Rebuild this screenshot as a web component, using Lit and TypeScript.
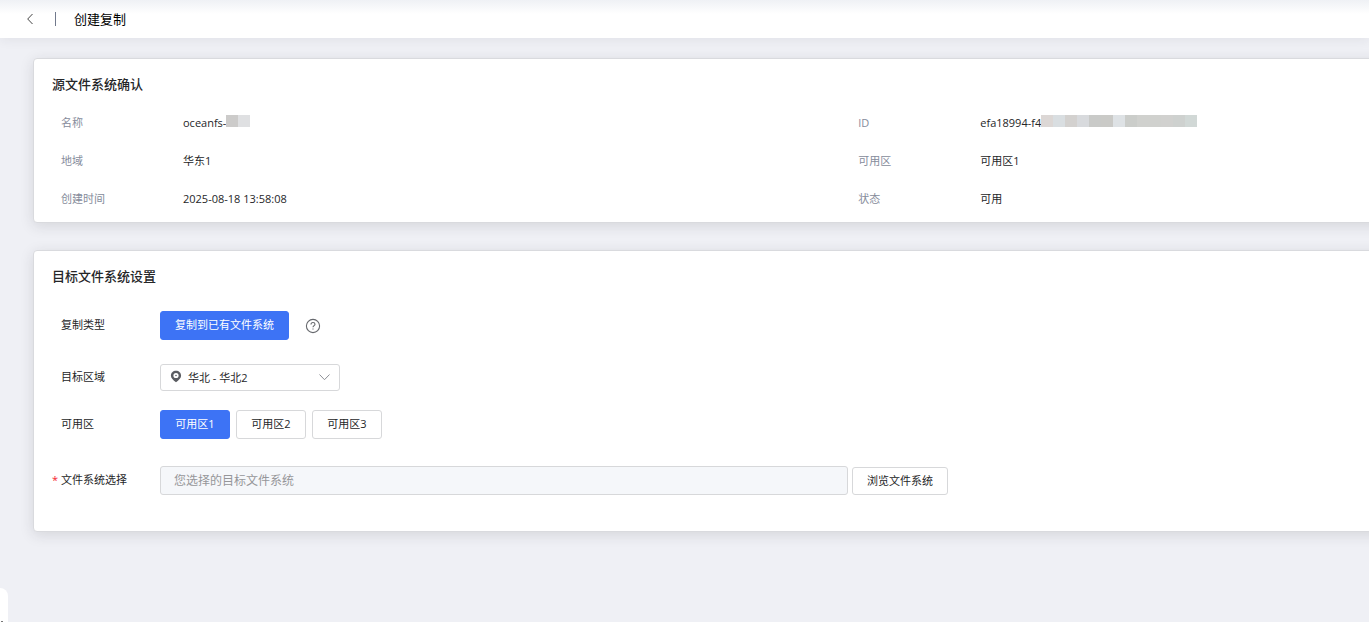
import { LitElement, html, css } from "lit";
import { customElement, state } from "lit/decorators.js";
import { styleMap } from "lit/directives/style-map.js";

interface Field {
  label: string;
  value: string;
  mask?: string[];
}

const FIELDS: Field[] = [
  { label: "名称", value: "oceanfs-", mask: ["#cccbca", "#dfe0e2"] },
  {
    label: "ID",
    value: "efa18994-f4",
    mask: [
      "#dcd7d5", "#d9dee1", "#d3d1cf", "#d8dadd", "#c9cac8", "#cacac7", "#dee2e5",
      "#cbcdca", "#d0d1ce", "#d0d1ce", "#d1d1cf", "#ced1cf", "#d1d8d6",
    ],
  },
  { label: "地域", value: "华东1" },
  { label: "可用区", value: "可用区1" },
  { label: "创建时间", value: "2025-08-18 13:58:08" },
  { label: "状态", value: "可用" },
];

const ZONES = ["可用区1", "可用区2", "可用区3"];

@customElement("app-root")
export class AppRoot extends LitElement {
  @state() private zone = ZONES[0];

  static styles = css`
    :host {
      display: block;
      min-height: 100vh;
      overflow: hidden;
      background: #eff0f5;
      color: #252628;
      font: 11px/20px "Open Sans", "Noto Sans CJK SC", sans-serif;
    }
    * {
      box-sizing: border-box;
    }
    .header {
      display: flex;
      align-items: center;
      height: 38px;
      padding-left: 24px;
      background: linear-gradient(#eff1f5, #fff 14px);
      box-shadow: 0 2px 12px rgba(37, 43, 58, 0.07);
    }
    .back {
      display: flex;
      padding: 0;
      border: 0;
      background: none;
    }
    .divider {
      width: 1px;
      height: 14px;
      margin: 0 18px;
      background: #71798c;
    }
    .title {
      margin: 0;
      color: #000;
      font-size: 13px;
      font-weight: 400;
    }
    .main {
      display: grid;
      gap: 27px;
      margin-right: -24px;
      padding: 20px 0 20px 33px;
    }
    .card {
      padding: 15px 24px 4px 18px;
      border: 1px solid #d9dade;
      border-radius: 4px;
      background: #fff;
      box-shadow: 0 3px 14px rgba(37, 38, 43, 0.13);
    }
    .card.settings {
      padding-bottom: 36px;
    }
    .card h2 {
      margin: 0;
      font-size: 13px;
      font-weight: 500;
      line-height: 20px;
    }
    .fields {
      display: grid;
      grid-template-columns: 61fr 39fr;
      margin: 10px 0 0;
      padding-left: 9px;
    }
    .field {
      display: flex;
      align-items: center;
      height: 38px;
    }
    .field dt {
      flex: 0 0 122px;
      color: #868c9b;
    }
    .field dd {
      display: flex;
      align-items: flex-start;
      margin: 0;
    }
    .mask {
      display: flex;
      padding-top: 2px;
    }
    .mask span {
      width: 12px;
      height: 12px;
    }
    .row {
      display: flex;
      align-items: center;
      max-width: 896px;
    }
    .type {
      margin-top: 25px;
    }
    .region {
      margin-top: 24px;
    }
    .zones {
      margin-top: 19px;
    }
    .target {
      margin-top: 27px;
    }
    .label {
      display: flex;
      flex: 0 0 108px;
      padding-bottom: 2px;
    }
    .label::before {
      content: "";
      width: 9px;
    }
    .label.required::before {
      content: "*";
      color: #f5222d;
    }
    .btn {
      height: 29px;
      padding: 0 14px 2px;
      border: 1px solid #d7d8da;
      border-radius: 3px;
      background: #fff;
      color: inherit;
      font: inherit;
      line-height: 20px;
      white-space: nowrap;
    }
    .btn.active {
      border-color: #3d73f5;
      background: #3d73f5;
      color: #fff;
    }
    .btn.browse {
      align-self: flex-end;
      height: 28px;
      margin-left: 4px;
      padding: 0 14px;
    }
    .group {
      display: flex;
      gap: 6px;
    }
    .group .btn {
      min-width: 70px;
    }
    .help {
      display: flex;
      margin-left: 16px;
      padding: 0;
      border: 0;
      background: none;
    }
    .select {
      position: relative;
      width: 180px;
      height: 27px;
    }
    .select select {
      width: 100%;
      height: 100%;
      padding: 0 28px 0 27px;
      border: 1px solid #d7d8da;
      border-radius: 3px;
      background: #fff;
      color: inherit;
      font: inherit;
      appearance: none;
    }
    .pin,
    .arrow {
      position: absolute;
      pointer-events: none;
    }
    .pin {
      top: 6px;
      left: 10px;
    }
    .arrow {
      top: 9px;
      right: 9px;
    }
    .input {
      flex: 1;
      min-width: 0;
      height: 29px;
      padding: 0 13px;
      border: 1px solid #d7d8da;
      border-radius: 3px;
      background: #f5f7fa;
      font: inherit;
      font-size: 12px;
    }
    .input::placeholder {
      color: #959699;
      opacity: 1;
    }
    .drawer {
      position: fixed;
      bottom: 0;
      left: 0;
      width: 8px;
      height: 34px;
      border-radius: 0 9px 0 0;
      background: #fff;
    }
    .drawer::after {
      content: "";
      position: absolute;
      bottom: 0;
      left: 1px;
      width: 2px;
      height: 1px;
      background: #777;
    }
  `;

  private renderField(f: Field) {
    return html`<div class="field">
      <dt>${f.label}</dt>
      <dd>
        ${f.value}${f.mask
          ? html`<span class="mask" aria-hidden="true"
              >${f.mask.map((c) => html`<span style=${styleMap({ background: c })}></span>`)}</span
            >`
          : null}
      </dd>
    </div>`;
  }

  render() {
    return html`
      <header class="header">
        <button class="back" aria-label="返回">
          <svg width="13" height="12" viewBox="0 0 13 12" fill="none" stroke="#444" stroke-width="1">
            <path d="M8.500 1 3.700 6l4.800 5" />
          </svg>
        </button>
        <span class="divider"></span>
        <h1 class="title">创建复制</h1>
      </header>
      <main class="main">
        <section class="card">
          <h2>源文件系统确认</h2>
          <dl class="fields">${FIELDS.map((f) => this.renderField(f))}</dl>
        </section>
        <section class="card settings">
          <h2>目标文件系统设置</h2>
          <div class="row type">
            <span class="label">复制类型</span>
            <button class="btn active">复制到已有文件系统</button>
            <button class="help" aria-label="帮助">
              <svg width="16" height="16" viewBox="0 0 16 16" fill="none" stroke="#66686d" stroke-width="1.1">
                <circle cx="8" cy="8" r="6.600" />
                <path d="M6 6.500c0-1.300.8-2 2-2s2 .7 2 1.800c0 1.300-2 1.500-2 3" />
                <path d="M8 10.400v1.200" />
              </svg>
            </button>
          </div>
          <div class="row region">
            <label class="label" for="region">目标区域</label>
            <div class="select">
              <select id="region">
                <option>华北 - 华北2</option>
              </select>
              <svg class="pin" width="12" height="13" viewBox="0 0 12 13">
                <path
                  fill="#5a5c61"
                  fill-rule="evenodd"
                  d="M6 .8C3.100.8.900 2.900.900 5.700.900 8.300 3.200 9.800 6 12.300 8.800 9.800 11.100 8.300 11.100 5.700 11.100 2.900 8.900.8 6 .8Zm0 2.100a2.600 2.600 0 1 1 0 5.200 2.600 2.600 0 0 1 0-5.200Z"
                />
                <circle cx="6" cy="5.500" r="0.800" fill="#5a5c61" />
              </svg>
              <svg class="arrow" width="13" height="9" viewBox="0 0 13 9" fill="none" stroke="#8d9096">
                <path d="M1.500 1.500 6.500 6.700l5-5.200" />
              </svg>
            </div>
          </div>
          <div class="row zones">
            <span class="label">可用区</span>
            <div class="group">
              ${ZONES.map(
                (z) => html`<button
                  class="btn ${z === this.zone ? "active" : ""}"
                  @click=${() => (this.zone = z)}
                >
                  ${z}
                </button>`,
              )}
            </div>
          </div>
          <div class="row target">
            <label class="label required" for="target">文件系统选择</label>
            <input class="input" id="target" placeholder="您选择的目标文件系统" readonly />
            <button class="btn browse">浏览文件系统</button>
          </div>
        </section>
      </main>
      <aside class="drawer"></aside>
    `;
  }
}
